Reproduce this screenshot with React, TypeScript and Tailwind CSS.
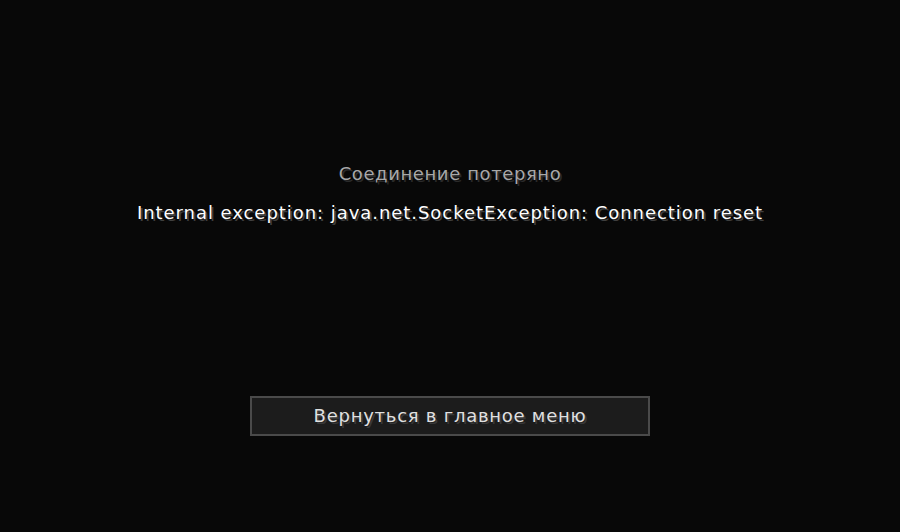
export default function App() {
  return (
    <div
      className="w-full h-screen bg-[#080808] flex flex-col items-center pt-[164px] text-[18px] leading-[20px]"
      style={{ fontFamily: '"DejaVu Sans", "Noto Sans", sans-serif' }}
    >
      <div className="text-[#a8a8a8] whitespace-nowrap tracking-[0.6px] [text-shadow:2px_2px_0_#2a2a2a]">
        Соединение потеряно
      </div>
      <div className="mt-[19px] text-white whitespace-nowrap tracking-[0.95px] [text-shadow:2px_2px_0_#3f3f3f]">
        Internal exception: java.net.SocketException: Connection reset
      </div>
      <button className="mt-[173px] w-[400px] h-[40px] border-2 border-[#4a4a4a] bg-[#1c1c1c] text-[#e0e0e0] whitespace-nowrap tracking-[0.75px] [text-shadow:2px_2px_0_#383838] flex items-center justify-center">
        Вернуться в главное меню
      </button>
    </div>
  );
}
